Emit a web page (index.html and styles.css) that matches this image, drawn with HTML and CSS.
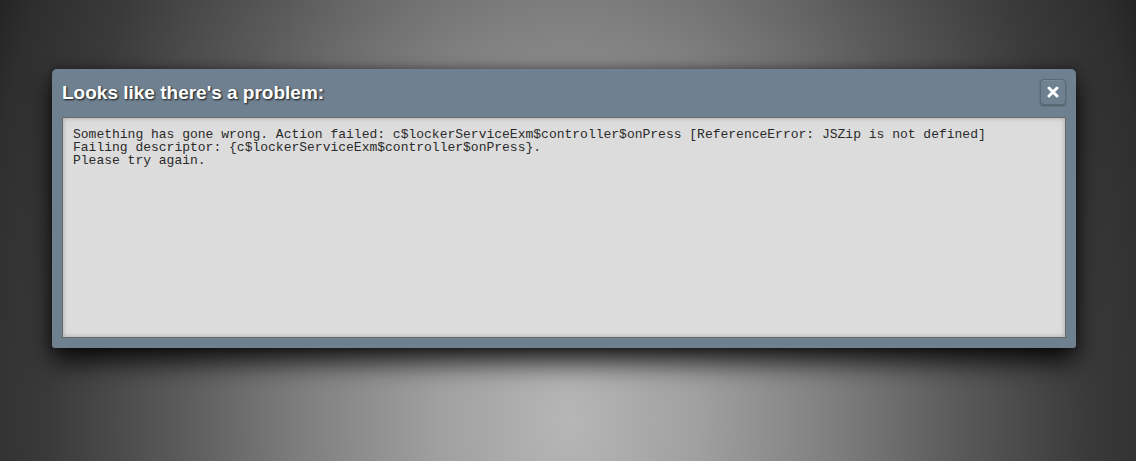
FILE: index.html
```html
<!DOCTYPE html>
<html>
<head>
<meta charset="utf-8">
<link rel="stylesheet" href="styles.css">
</head>
<body>
<div class="page">
  <div class="dialog">
    <div class="dialog-head">
      <h1 class="dialog-title">Looks like there's a problem:</h1>
      <button class="close-btn" type="button" aria-label="Close">
        <svg width="12" height="12" viewBox="0 0 12 12"><path d="M2 2 L10 10 M10 2 L2 10" stroke="#fff" stroke-width="3" stroke-linecap="round" fill="none"/></svg>
      </button>
    </div>
    <div class="dialog-body">
      <div class="message">Something has gone wrong. Action failed: c$lockerServiceExm$controller$onPress [ReferenceError: JSZip is not defined]
Failing descriptor: {c$lockerServiceExm$controller$onPress}.
Please try again.</div>
    </div>
  </div>
</div>
</body>
</html>
```

FILE: styles.css
```css
html, body {
  margin: 0;
  padding: 0;
  height: 100%;
}
body {
  background: #1e1e1e radial-gradient(ellipse 650px 1000px at 50% 420px, #b6b6b6 0%, #a0a0a0 20%, #808080 40%, #5a5a5a 60%, #3a3a3a 80%, #2e2e2e 92%, #1e1e1e 100%);
  font-family: "Liberation Sans", Arial, sans-serif;
  overflow: hidden;
}
.page {
  padding-top: 69px;
  padding-left: 52px;
}
.dialog {
  width: 1024px;
  background: #6f8090;
  border-radius: 5px 5px 3px 3px;
  box-shadow: 0 14px 26px rgba(0, 0, 0, 0.85), 0 0 10px rgba(0, 0, 0, 0.35);
  padding: 10px;
  box-sizing: border-box;
}
.dialog-head {
  display: flex;
  justify-content: space-between;
  align-items: flex-start;
  height: 26px;
  margin-bottom: 12px;
}
.dialog-title {
  margin: 1px 0 0 0;
  font-size: 19px;
  line-height: 26px;
  font-weight: bold;
  color: #fff;
  letter-spacing: 0;
  text-shadow: 1px 1px 2px rgba(0, 0, 0, 0.85);
}
.close-btn {
  width: 26px;
  height: 26px;
  padding: 0;
  margin: 0;
  border: 1px solid #5c6a77;
  border-radius: 4px;
  background: #6f8090;
  box-shadow: 0 1px 2px rgba(0, 0, 0, 0.3), inset 0 1px 0 rgba(255, 255, 255, 0.08);
  display: flex;
  align-items: center;
  justify-content: center;
}
.close-btn svg {
  display: block;
}
.dialog-body {
  height: 221px;
  box-sizing: border-box;
  border: 1px solid #6a6a6a;
  background: #dcdcdc;
  box-shadow: inset 0 0 5px rgba(0, 0, 0, 0.25);
  padding: 10px;
}
.message {
  font-family: "Liberation Mono", "Courier New", monospace;
  font-size: 13px;
  line-height: 13px;
  color: #2a2a2a;
  white-space: pre;
}
```
